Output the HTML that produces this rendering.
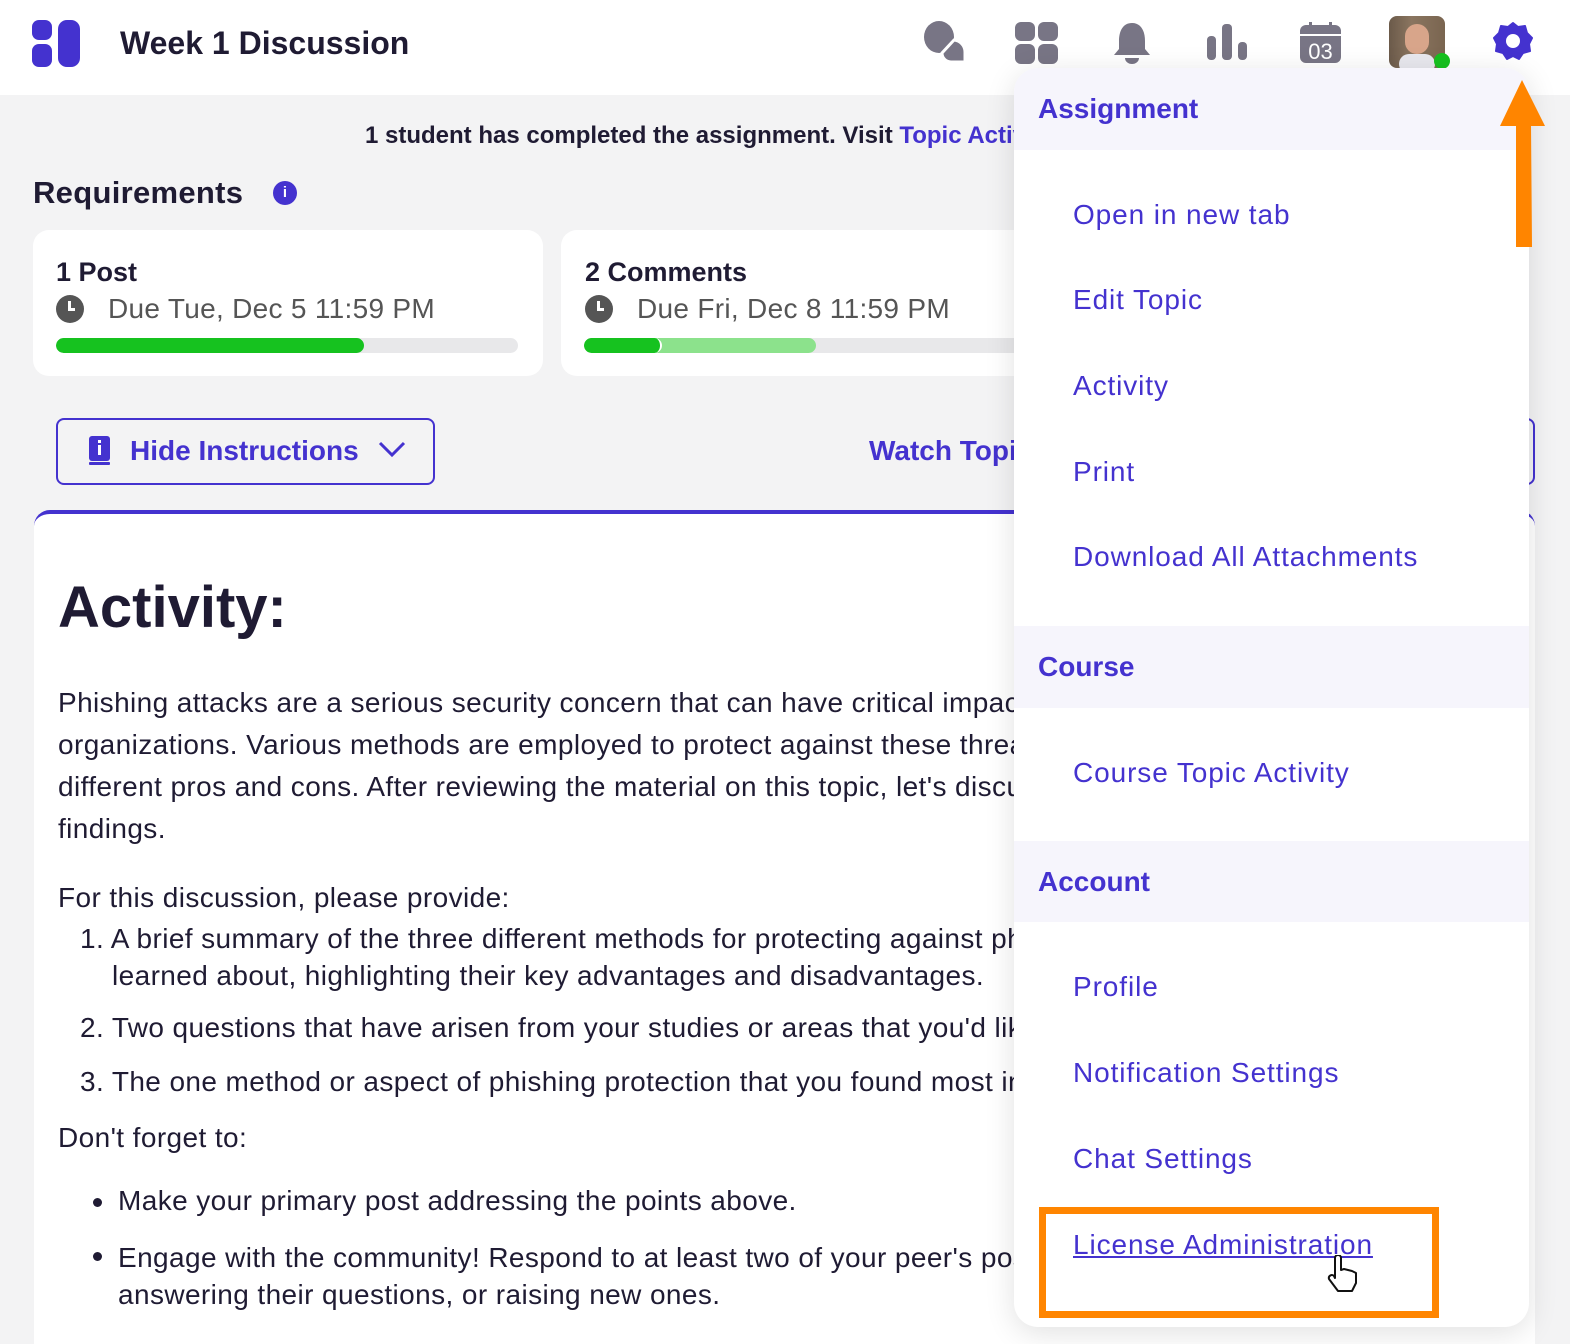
<!DOCTYPE html>
<html><head><meta charset="utf-8"><style>
*{margin:0;padding:0;box-sizing:border-box}
html,body{width:1570px;height:1344px;overflow:hidden}
body{background:#f3f3f4;font-family:"Liberation Sans",sans-serif;color:#1f1b33;position:relative}
.a{position:absolute;white-space:nowrap}
.p{color:#4432cf}
.hdr{position:absolute;left:0;top:0;width:1570px;height:95px;background:#fff}
.card{position:absolute;background:#fff;border-radius:16px}
.bar{position:absolute;height:15px;border-radius:8px;background:#e8e8ea;overflow:hidden}
.body{font-size:28px;letter-spacing:0.4px;color:#1f1b33}
.dd{position:absolute;left:1014px;top:68px;width:515px;height:1259px;background:#fff;border-radius:24px;box-shadow:0 6px 30px rgba(0,0,0,.12);overflow:hidden}
.sec{position:absolute;left:0;width:515px;background:#f6f5fc;font-weight:bold;font-size:28px;color:#4432cf;padding-left:24px}
.it{position:absolute;left:59px;font-size:28px;letter-spacing:0.9px;color:#4432cf;white-space:nowrap}
</style></head><body>
<div class="hdr"></div>
<svg class="a" style="left:32px;top:20px" width="50" height="48"><rect x="0" y="0" width="20" height="20" rx="7" fill="#4432cf"/><rect x="0" y="24" width="20" height="23" rx="7" fill="#4432cf"/><rect x="26" y="0" width="22" height="47" rx="9" fill="#4432cf"/></svg>
<div class="a" style="left:120px;top:25px;font-size:32px;font-weight:bold;color:#1f1b33">Week 1 Discussion</div>
<svg class="a" style="left:920px;top:20px" width="50" height="45"><ellipse cx="19" cy="17" rx="15" ry="16" fill="#787585"/><path d="M34 20a12 12 0 0 1 11 12v10h-14a9 9 0 0 1-9-9z" fill="#787585" stroke="#fff" stroke-width="3"/></svg>
<svg class="a" style="left:1015px;top:22px" width="44" height="42"><rect x="0" y="0" width="20" height="19" rx="6" fill="#787585"/><rect x="23" y="0" width="20" height="19" rx="6" fill="#787585"/><rect x="0" y="22" width="20" height="20" rx="6" fill="#787585"/><rect x="23" y="22" width="20" height="20" rx="6" fill="#787585"/></svg>
<svg class="a" style="left:1112px;top:22px" width="40" height="42"><path d="M20 1c9 0 13 8 13 18v8l5 6H2l5-6v-8C7 9 11 1 20 1z" fill="#787585"/><path d="M13 36h14a7 6 0 0 1-14 0z" fill="#787585"/></svg>
<svg class="a" style="left:1207px;top:24px" width="42" height="38"><rect x="0" y="12" width="9" height="24" rx="4" fill="#787585"/><rect x="15" y="0" width="10" height="36" rx="4" fill="#787585"/><rect x="31" y="18" width="9" height="18" rx="4" fill="#787585"/></svg>
<svg class="a" style="left:1300px;top:22px" width="42" height="42"><rect x="0" y="3" width="41" height="38" rx="6" fill="#787585"/><rect x="9" y="0" width="3" height="7" fill="#787585"/><rect x="29" y="0" width="3" height="7" fill="#787585"/><rect x="0" y="12" width="41" height="2" fill="#fff"/><text x="20.5" y="37" text-anchor="middle" font-family="Liberation Sans" font-size="22" fill="#fff">03</text></svg>
<div class="a" style="left:1389px;top:16px;width:56px;height:52px;border-radius:8px;background:linear-gradient(90deg,#6b5a4a,#8a7560 40%,#7a6550);overflow:hidden"><div style="position:absolute;left:16px;top:8px;width:24px;height:30px;border-radius:12px;background:#d8a58a"></div><div style="position:absolute;left:10px;top:38px;width:36px;height:20px;border-radius:10px;background:#e8e8ee"></div></div>
<div class="a" style="left:1434px;top:53px;width:16px;height:16px;border-radius:8px;background:#16c21f"></div>
<svg class="a" style="left:1493px;top:21px" width="40" height="40" viewBox="0 0 40 40"><path d="M20 2l5 4 7-1 2 7 5 5-3 6 1 7-7 2-4 6-6-3-6 3-4-6-7-2 1-7-3-6 5-5 2-7 7 1z" fill="#4432cf" stroke="#4432cf" stroke-width="2" stroke-linejoin="round"/><circle cx="20" cy="20" r="7" fill="#fff"/></svg>
<div class="a" style="left:365px;top:122px;font-size:24px;font-weight:bold;color:#1f1b33">1 student has completed the assignment. Visit <span class="p">Topic Activity</span></div>
<div class="a" style="left:33px;top:175px;font-size:31px;font-weight:bold;letter-spacing:0.3px">Requirements</div>
<div class="a" style="left:273px;top:181px;width:24px;height:24px;border-radius:12px;background:#4432cf;color:#fff;font-size:15px;text-align:center;line-height:24px;font-weight:bold">i</div>
<div class="card" style="left:33px;top:230px;width:510px;height:146px"></div>
<div class="card" style="left:561px;top:230px;width:700px;height:146px"></div>
<div class="a" style="left:56px;top:257px;font-size:27px;font-weight:bold">1 Post</div>
<div class="a" style="left:56px;top:295px;width:28px;height:28px;border-radius:14px;background:#555"><div style="position:absolute;left:12px;top:6px;width:3px;height:9px;background:#fff"></div><div style="position:absolute;left:12px;top:13px;width:7px;height:3px;background:#fff"></div></div>
<div class="a" style="left:108px;top:293px;font-size:28px;letter-spacing:0.3px;color:#555">Due Tue, Dec 5 11:59 PM</div>
<div class="bar" style="left:56px;top:338px;width:462px"><div style="width:308px;height:15px;background:#16c21f;border-radius:8px"></div></div>
<div class="a" style="left:585px;top:257px;font-size:27px;font-weight:bold">2 Comments</div>
<div class="a" style="left:585px;top:295px;width:28px;height:28px;border-radius:14px;background:#555"><div style="position:absolute;left:12px;top:6px;width:3px;height:9px;background:#fff"></div><div style="position:absolute;left:12px;top:13px;width:7px;height:3px;background:#fff"></div></div>
<div class="a" style="left:637px;top:293px;font-size:28px;letter-spacing:0.3px;color:#555">Due Fri, Dec 8 11:59 PM</div>
<div class="bar" style="left:584px;top:338px;width:700px"><div style="position:absolute;left:0;width:232px;height:15px;background:#8ce28c;border-radius:8px"></div><div style="position:absolute;left:0;width:78px;height:15px;background:#16c21f;border-radius:8px;border-right:2px solid #fff"></div></div>
<div class="a" style="left:56px;top:418px;width:379px;height:67px;border:2px solid #4432cf;border-radius:8px"></div>
<svg class="a" style="left:88px;top:436px" width="24" height="30"><rect x="1" y="0" width="21" height="25" rx="3" fill="#4432cf"/><rect x="1" y="26" width="21" height="3" rx="1" fill="#4432cf"/><rect x="10" y="9" width="3" height="10" fill="#fff"/><rect x="10" y="4" width="3" height="3" fill="#fff"/></svg>
<div class="a p" style="left:130px;top:435px;font-size:28px;font-weight:bold">Hide Instructions</div>
<svg class="a" style="left:377px;top:440px" width="30" height="20"><path d="M3 3l12 12 12-12" fill="none" stroke="#4432cf" stroke-width="3"/></svg>
<div class="a p" style="left:869px;top:435px;font-size:28px;font-weight:bold">Watch Topic</div>
<div class="a" style="left:1030px;top:418px;width:505px;height:67px;border:2px solid #4432cf;border-radius:8px"></div>
<div class="card" style="left:34px;top:510px;width:1501px;height:834px;border-top:4px solid #4432cf;border-radius:16px 16px 0 0"></div>
<div class="a" style="left:58px;top:574px;font-size:58px;font-weight:bold;color:#1f1b33">Activity:</div>
<div class="a body" style="left:58px;top:682px;line-height:42px">Phishing attacks are a serious security concern that can have critical impacts on individuals and<br>organizations. Various methods are employed to protect against these threats, each with its own<br>different pros and cons. After reviewing the material on this topic, let's discuss your thoughts and<br>findings.</div>
<div class="a body" style="left:58px;top:882px">For this discussion, please provide:</div>
<div class="a body" style="left:80px;top:920px;line-height:37px">1. A brief summary of the three different methods for protecting against phishing attacks that you<br><span style="padding-left:32px">learned about, highlighting their key advantages and disadvantages.</span></div>
<div class="a body" style="left:80px;top:1012px">2. Two questions that have arisen from your studies or areas that you'd like to explore further.</div>
<div class="a body" style="left:80px;top:1066px">3. The one method or aspect of phishing protection that you found most interesting and why.</div>
<div class="a body" style="left:58px;top:1122px">Don't forget to:</div>
<div class="a" style="left:93px;top:1198px;width:9px;height:9px;border-radius:5px;background:#1f1b33"></div>
<div class="a body" style="left:118px;top:1185px">Make your primary post addressing the points above.</div>
<div class="a" style="left:93px;top:1252px;width:9px;height:9px;border-radius:5px;background:#1f1b33"></div>
<div class="a body" style="left:118px;top:1239px;line-height:37px">Engage with the community! Respond to at least two of your peer's posts, commenting on their points,<br>answering their questions, or raising new ones.</div>
<div class="dd">
<div class="sec" style="top:0;height:82px;line-height:82px">Assignment</div>
<div class="it" style="top:131px">Open in new tab</div>
<div class="it" style="top:216px">Edit Topic</div>
<div class="it" style="top:302px">Activity</div>
<div class="it" style="top:388px">Print</div>
<div class="it" style="top:473px">Download All Attachments</div>
<div class="sec" style="top:558px;height:82px;line-height:82px">Course</div>
<div class="it" style="top:689px">Course Topic Activity</div>
<div class="sec" style="top:773px;height:81px;line-height:81px">Account</div>
<div class="it" style="top:903px">Profile</div>
<div class="it" style="top:989px">Notification Settings</div>
<div class="it" style="top:1075px">Chat Settings</div>
<div class="it" style="top:1161px;text-decoration:underline">License Administration</div>
</div>
<div class="a" style="left:1039px;top:1207px;width:400px;height:111px;border:7px solid #ff8500"></div>
<svg class="a" style="left:1326px;top:1255px" width="40" height="42"><path d="M9 3a3 3 0 0 1 6 0v12l3-1 4 1 4 1 4 2v10l-4 8H12L3 24a3 3 0 0 1 5-3l1 2z" fill="#fff" stroke="#111" stroke-width="2" stroke-linejoin="round"/></svg>
<svg class="a" style="left:1498px;top:78px" width="50" height="172"><path d="M24 2L47 48H33L34 169H18L18 48H2Z" fill="#ff8500"/></svg>
</body></html>
